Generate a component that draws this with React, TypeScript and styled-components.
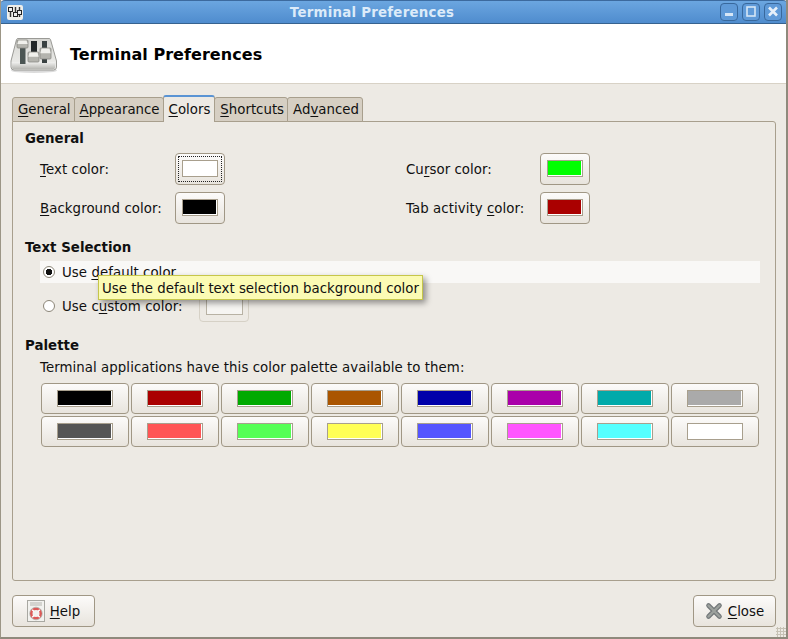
import * as React from "react";
import styled, { createGlobalStyle } from "styled-components";

const GlobalStyle = createGlobalStyle`
  html, body { margin: 0; padding: 0; background: #edeae4; }
  body { font-family: "DejaVu Sans", sans-serif; font-size: 13.33px; color: #101010; }
`;

const paletteColors = [
  "#000000", "#aa0000", "#00aa00", "#aa5500", "#0000aa", "#aa00aa", "#00aaaa", "#aaaaaa",
  "#555555", "#ff5555", "#55ff55", "#ffff55", "#5555ff", "#ff55ff", "#55ffff", "#ffffff",
];

const tabs: { label: string; key: string; before: string; after: string }[] = [
  { label: "General", before: "", key: "G", after: "eneral" },
  { label: "Appearance", before: "", key: "A", after: "ppearance" },
  { label: "Colors", before: "", key: "C", after: "olors" },
  { label: "Shortcuts", before: "", key: "S", after: "hortcuts" },
  { label: "Advanced", before: "Ad", key: "v", after: "anced" },
];

const Knob: React.FC<{ x: number; y: number; w: number; h: number }> = ({ x, y, w, h }) => (
  <g>
    <rect x={x} y={y} width={w} height={h} rx="1" fill="#b4b4ae" stroke="#8c8c86" strokeWidth="0.8" />
    <path d={`M${x + 1.5} ${y + 0.6}h${w - 3}l1.2 ${h * 0.42}h${-w + 0.6}z`} fill="#f0f0ec" />
  </g>
);

const MixerIcon: React.FC = () => (
  <svg width="48" height="48" viewBox="0 0 48 48">
    <defs>
      <linearGradient id="tray" x1="0" y1="0" x2="0" y2="1">
        <stop offset="0" stopColor="#d6d6d2" />
        <stop offset="1" stopColor="#f0f0ee" />
      </linearGradient>
      <linearGradient id="lip" x1="0" y1="0" x2="0" y2="1">
        <stop offset="0" stopColor="#f2f2f0" />
        <stop offset="1" stopColor="#b4b4b0" />
      </linearGradient>
    </defs>
    <ellipse cx="24" cy="40.5" rx="23" ry="2.5" fill="#000" opacity="0.14" />
    <path d="M8 8.5h31q1 0 1.5 1L46.5 31v6q0 3-3 3H4q-3 0-3-3v-6L6.5 9.5q.5-1 1.5-1z" fill="url(#tray)" stroke="#9a9a96" />
    <path d="M1.8 32h43.4v5q0 2.2-2.2 2.2H4q-2.2 0-2.2-2.2z" fill="url(#lip)" />
    <rect x="10" y="18" width="5.5" height="16" fill="#4c5654" />
    <rect x="21" y="11" width="6" height="12" fill="#23282a" />
    <rect x="32" y="11" width="5" height="22" fill="#3a4242" />
    <Knob x={7} y={10} w={11} h={8} />
    <Knob x={18} y={22} w={11} h={10} />
    <Knob x={30} y={18} w={11} h={11} />
  </svg>
);

const SmallMixer: React.FC = () => (
  <svg width="14" height="12" viewBox="0 0 14 12">
    <path d="M2.5 1v10M7.5 1v10M11.5 1v10" stroke="#333" strokeWidth="1.4" />
    <rect x="0.5" y="1.5" width="4" height="4" fill="#eee" stroke="#222" />
    <rect x="5.5" y="6.5" width="4" height="4" fill="#eee" stroke="#222" />
    <rect x="9.5" y="4.5" width="4" height="4" fill="#eee" stroke="#222" />
  </svg>
);

const HelpIcon: React.FC = () => (
  <svg width="18" height="22" viewBox="0 0 18 22">
    <rect x="0.5" y="0.5" width="17" height="21" fill="#f2f2ef" stroke="#a8a8a2" />
    <path d="M3 3h12M3 5h12" stroke="#b5b5af" />
    <circle cx="9" cy="13.5" r="4.8" fill="none" stroke="#dc5a58" strokeWidth="2.6" />
    <circle cx="9" cy="13.5" r="6.3" fill="none" stroke="#9a9a94" strokeWidth="0.6" />
    <path d="M5.2 9.7l1.8 1.8M12.8 9.7l-1.8 1.8M5.2 17.3l1.8-1.8M12.8 17.3l-1.8-1.8" stroke="#ffffff" strokeWidth="1.5" />
  </svg>
);

const CloseIcon: React.FC = () => (
  <svg width="18" height="18" viewBox="0 0 18 18">
    <path d="M3.5 3.5L14.5 14.5M14.5 3.5L3.5 14.5" stroke="#73787a" strokeWidth="4.6" strokeLinecap="round" />
    <path d="M3.5 3.5L14.5 14.5M14.5 3.5L3.5 14.5" stroke="#9ca19d" strokeWidth="2.4" strokeLinecap="round" />
  </svg>
);

const Swatch: React.FC<{ color: string; focused?: boolean }> = ({ color, focused }) => (
  <ColorButton $focused={focused}>
    <ColorFill $color={color} />
  </ColorButton>
);

export default function App() {
  return (
    <>
      <GlobalStyle />
      <Frame>
        <TitleBar>
          <AppBadge>
            <SmallMixer />
          </AppBadge>
          <TitleText>Terminal Preferences</TitleText>
          <WindowButtons>
            <WindowButton>
              <svg width="12" height="12" viewBox="0 0 12 12">
                <rect x="2" y="7" width="8" height="3" fill="#d6e6f6" />
              </svg>
            </WindowButton>
            <WindowButton>
              <svg width="12" height="12" viewBox="0 0 12 12">
                <rect x="2" y="1" width="8" height="9" fill="none" stroke="#d6e6f6" strokeWidth="1.6" />
              </svg>
            </WindowButton>
            <WindowButton>
              <svg width="12" height="12" viewBox="0 0 12 12">
                <path d="M2 1.5l8 8M10 1.5l-8 8" stroke="#e6f0fa" strokeWidth="2.6" />
              </svg>
            </WindowButton>
          </WindowButtons>
        </TitleBar>

        <Banner>
          <MixerIcon />
          <BannerTitle>Terminal Preferences</BannerTitle>
        </Banner>

        <Content>
          <TabBar>
            {tabs.map((t) => (
              <Tab key={t.label} $active={t.label === "Colors"}>
                {t.before}
                <Mnemonic>{t.key}</Mnemonic>
                {t.after}
              </Tab>
            ))}
          </TabBar>

          <Panel>
            <SectionTitle>General</SectionTitle>
            <ColorGrid>
              <ColorRow>
                <ColorLabel>
                  <Mnemonic>T</Mnemonic>ext color:
                </ColorLabel>
                <Swatch color="#ffffff" focused />
              </ColorRow>
              <ColorRow>
                <RightLabel>
                  Cu<Mnemonic>r</Mnemonic>sor color:
                </RightLabel>
                <Swatch color="#00ff00" />
              </ColorRow>
              <ColorRow>
                <ColorLabel>
                  <Mnemonic>B</Mnemonic>ackground color:
                </ColorLabel>
                <Swatch color="#000000" />
              </ColorRow>
              <ColorRow>
                <RightLabel>
                  Tab activity <Mnemonic>c</Mnemonic>olor:
                </RightLabel>
                <Swatch color="#aa0000" />
              </ColorRow>
            </ColorGrid>

            <SelectionTitle>Text Selection</SelectionTitle>
            <RadioRow $hover>
              <Radio $checked />
              <span>
                Use <Mnemonic>d</Mnemonic>efault color
              </span>
            </RadioRow>
            <CustomRow>
              <Radio />
              <CustomLabel>
                Use c<Mnemonic>u</Mnemonic>stom color:
              </CustomLabel>
              <DisabledSwatch>
                <DisabledFill />
              </DisabledSwatch>
            </CustomRow>

            <PaletteTitle>Palette</PaletteTitle>
            <PaletteHint>Terminal applications have this color palette available to them:</PaletteHint>
            <PaletteGrid>
              {paletteColors.map((c) => (
                <PaletteButton key={c}>
                  <PaletteFill $color={c} />
                </PaletteButton>
              ))}
            </PaletteGrid>

            <Tooltip>Use the default text selection background color</Tooltip>
          </Panel>

          <Footer>
            <FooterButton>
              <HelpIcon />
              <span>
                <Mnemonic>H</Mnemonic>elp
              </span>
            </FooterButton>
            <FooterButton>
              <CloseIcon />
              <span>
                <Mnemonic>C</Mnemonic>lose
              </span>
            </FooterButton>
          </Footer>
        </Content>
        <Grip />
      </Frame>
    </>
  );
}

const Frame = styled.div`
  position: relative;
  width: 788px;
  height: 639px;
  box-sizing: border-box;
  display: flex;
  flex-direction: column;
  overflow: hidden;
  background: #edeae4;
  border-left: 1px solid #9c9686;
  border-right: 2px solid #8f8a7c;
  border-bottom: 2px solid #8f8a7c;
`;

const TitleBar = styled.div`
  flex: none;
  height: 24px;
  margin: 0 -2px 0 -1px;
  padding: 0 6px 0 7px;
  box-sizing: border-box;
  display: flex;
  align-items: center;
  position: relative;
  border-radius: 5px 5px 0 0;
  background: linear-gradient(#6ba6e0, #4f8cce);
  border-top: 1px solid #3c6a9e;
  border-bottom: 1px solid #36628f;
`;

const AppBadge = styled.div`
  width: 16px;
  height: 15px;
  display: flex;
  align-items: center;
  justify-content: center;
  background: #eeeeea;
  border-radius: 2px;
`;

const TitleText = styled.div`
  position: absolute;
  left: 0;
  right: 44px;
  top: 4px;
  text-align: center;
  font-weight: bold;
  font-size: 13.33px;
  letter-spacing: 0.25px;
  color: #dcebf9;
`;

const WindowButtons = styled.div`
  margin-left: auto;
  display: flex;
  gap: 4px;
`;

const WindowButton = styled.div`
  width: 18px;
  height: 18px;
  box-sizing: border-box;
  display: flex;
  align-items: center;
  justify-content: center;
  border: 1px solid #38689c;
  border-radius: 4px;
  background: #5f9ad8;
`;

const Banner = styled.div`
  flex: none;
  height: 60px;
  box-sizing: border-box;
  padding: 0 0 0 9px;
  display: flex;
  align-items: center;
  gap: 12px;
  background: #ffffff;
  border-bottom: 1px solid #d8d2c6;
`;

const BannerTitle = styled.div`
  font-size: 16px;
  font-weight: bold;
  letter-spacing: 0.05px;
  color: #000;
  margin-top: 1px;
`;

const Content = styled.div`
  flex: 1;
  display: flex;
  flex-direction: column;
  padding: 12px 10px 10px 11px;
  min-height: 0;
`;

const TabBar = styled.div`
  flex: none;
  height: 26px;
  padding-left: 1px;
  display: flex;
  align-items: flex-end;
  position: relative;
  z-index: 1;
  margin-bottom: -1px;
`;

const Tab = styled.div<{ $active?: boolean }>`
  box-sizing: border-box;
  height: ${(p) => (p.$active ? 27 : 25)}px;
  padding: ${(p) => (p.$active ? "5px 4px 0 5px" : "4px 3px 0 5px")};
  border: 1px solid #a89f8d;
  border-bottom: ${(p) => (p.$active ? "none" : "1px solid #a89f8d")};
  border-top: ${(p) => (p.$active ? "2px solid #5a94d4" : "1px solid #a89f8d")};
  border-radius: 3px 3px 0 0;
  background: ${(p) => (p.$active ? "#edeae4" : "#d6cfc3")};
  margin-left: -1px;
  white-space: nowrap;
  position: relative;
  z-index: ${(p) => (p.$active ? 2 : 1)};
`;

const Mnemonic = styled.span`
  text-decoration: underline;
  text-underline-offset: 2px;
`;

const Panel = styled.div`
  position: relative;
  flex: none;
  height: 460px;
  box-sizing: border-box;
  padding: 9px 15px 0 12px;
  border: 1px solid #a89f8d;
  border-radius: 0 3px 3px 3px;
`;

const SectionTitle = styled.div`
  font-weight: bold;
  line-height: 16px;
  letter-spacing: 0.04px;
`;

const SelectionTitle = styled(SectionTitle)`
  margin-top: 16px;
`;

const PaletteTitle = styled(SectionTitle)`
  margin-top: 19px;
`;

const ColorGrid = styled.div`
  margin-top: 6px;
  display: grid;
  grid-template-columns: 366px 1fr;
  row-gap: 7px;
`;

const ColorRow = styled.div`
  display: flex;
  align-items: center;
  height: 32px;
  padding-left: 15px;
`;

const ColorLabel = styled.div`
  width: 135px;
  letter-spacing: 0.06px;
`;

const RightLabel = styled.div`
  width: 134px;
  letter-spacing: 0.06px;
`;

const ColorButton = styled.div<{ $focused?: boolean }>`
  width: 50px;
  height: 32px;
  box-sizing: border-box;
  border: 1px solid #a09785;
  border-radius: 4px;
  background: linear-gradient(#fcfbfa, #e8e4dd);
  display: flex;
  align-items: center;
  justify-content: center;
  position: relative;
  ${(p) =>
    p.$focused &&
    `&::after { content: ""; position: absolute; inset: 2px; border: 1px dotted #222; }`}
`;

const ColorFill = styled.div<{ $color: string }>`
  width: 33px;
  height: 14px;
  margin-top: -1px;
  background: ${(p) => p.$color};
  border-right: 1px solid #fff;
  border-bottom: 1px solid #fff;
  outline: 1px solid #a89f8d;
`;

const RadioRow = styled.div<{ $hover?: boolean }>`
  margin: 5px 0 0 15px;
  width: 720px;
  height: 22px;
  box-sizing: border-box;
  padding-left: 3px;
  display: flex;
  align-items: center;
  gap: 7px;
  letter-spacing: 0.06px;
  background: ${(p) => (p.$hover ? "#f9f8f6" : "transparent")};
`;

const CustomRow = styled(RadioRow)`
  margin-top: 10px;
  height: 26px;
`;

const CustomLabel = styled.span`
  width: 130px;
`;

const Radio = styled.div<{ $checked?: boolean }>`
  width: 12px;
  height: 12px;
  box-sizing: border-box;
  flex: none;
  border-radius: 50%;
  border: 1px solid #8c8678;
  background: ${(p) =>
    p.$checked ? "radial-gradient(circle, #111 0 3px, #fff 3.5px)" : "#ffffff"};
`;

const DisabledSwatch = styled.div`
  width: 50px;
  height: 32px;
  box-sizing: border-box;
  flex: none;
  border: 1px solid #d6d1c6;
  border-radius: 4px;
  display: flex;
  align-items: center;
  justify-content: center;
`;

const DisabledFill = styled.div`
  width: 35px;
  height: 16px;
  margin-top: -1px;
  background: #f6f5f2;
  border: 1px solid #b8b2a4;
`;

const PaletteHint = styled.div`
  margin: 6px 0 0 15px;
  line-height: 16px;
  letter-spacing: 0.06px;
`;

const PaletteGrid = styled.div`
  margin: 7px 0 0 16px;
  display: grid;
  grid-template-columns: repeat(8, 88px);
  column-gap: 2px;
  row-gap: 2px;
`;

const PaletteButton = styled.div`
  height: 31px;
  box-sizing: border-box;
  border: 1px solid #a09785;
  border-radius: 4px;
  background: linear-gradient(#fcfbfa, #e8e4dd);
  display: flex;
  align-items: center;
  justify-content: center;
`;

const PaletteFill = styled.div<{ $color: string }>`
  width: 53px;
  height: 14px;
  margin-top: -1px;
  background: ${(p) => p.$color};
  border-right: 1px solid #fff;
  border-bottom: 1px solid #fff;
  outline: 1px solid #a89f8d;
`;

const Tooltip = styled.div`
  position: absolute;
  left: 85px;
  top: 153px;
  height: 25px;
  box-sizing: border-box;
  padding: 5px 3px 0 3px;
  background: #fbfbb4;
  border: 1px solid #c6c64a;
  white-space: nowrap;
  box-shadow: 3px 3px 6px rgba(0, 0, 0, 0.4);
`;

const Footer = styled.div`
  flex: 1;
  display: flex;
  justify-content: space-between;
  align-items: flex-start;
  padding-top: 14px;
`;

const FooterButton = styled.div`
  width: 83px;
  height: 32px;
  box-sizing: border-box;
  border: 1px solid #a09785;
  border-radius: 4px;
  background: linear-gradient(#fcfbfa, #e8e4dd);
  display: flex;
  align-items: center;
  justify-content: center;
  gap: 5px;
`;

const Grip = styled.div`
  position: absolute;
  right: 0;
  bottom: 0;
  width: 10px;
  height: 10px;
  background-image: radial-gradient(circle, #c6c1b4 1px, transparent 1.2px);
  background-size: 3px 3px;
`;
